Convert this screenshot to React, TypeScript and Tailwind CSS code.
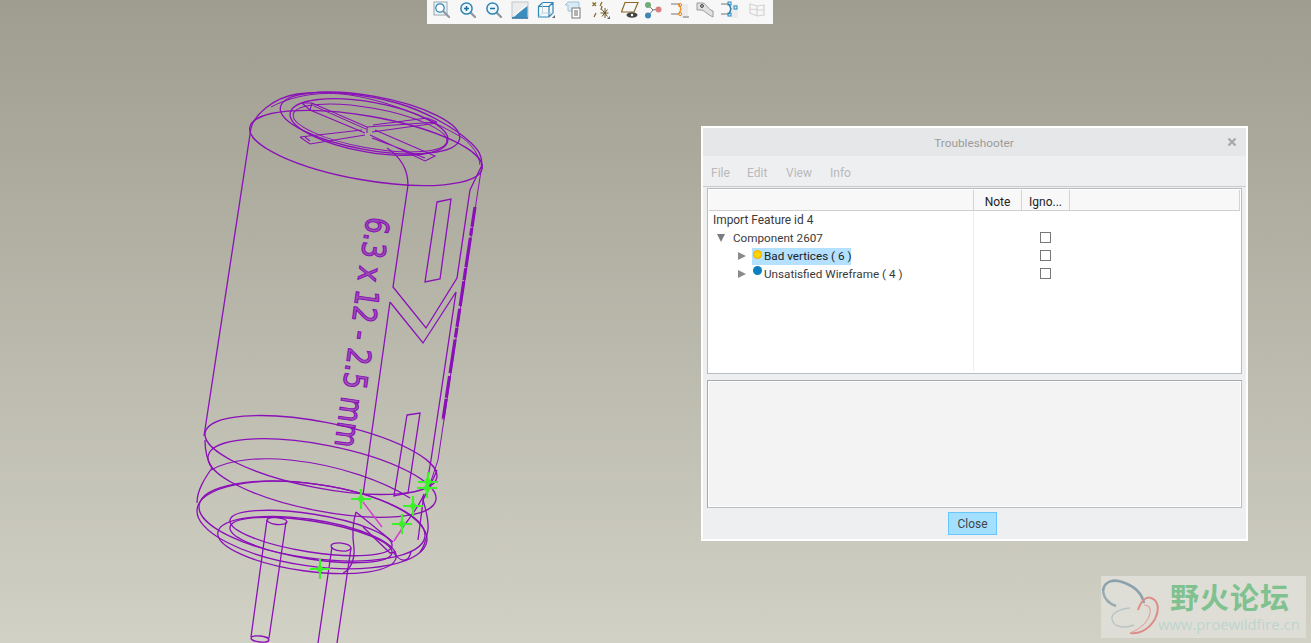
import React from "react";

const P = "#8a10b8";

function ModelDrawing() {
  const crosses: [number, number][] = [[361, 499], [413, 506], [402, 524], [428, 482], [427, 488], [320, 569]];
  return (
    <svg className="block w-full h-full" viewBox="0 0 1311 643" fill="none" stroke={P} strokeWidth="1.3">
      {/* top */}
      <ellipse cx="366" cy="148" rx="118" ry="32" transform="rotate(10 366 148)" />
      <path d="M251 128 C254 116 272 98 297 94 C325 90 365 94 397 103 C425 111 455 128 470 142 C479 150 482 156 482 165" />
      <path d="M271 107 C300 92 330 92 350 95 C395 102 435 122 463 138 C473 146 479 155 480 165" strokeWidth="1" />
      <ellipse cx="370" cy="123" rx="91" ry="27" transform="rotate(10 370 123)" />
      <ellipse cx="369" cy="127" rx="80" ry="25" transform="rotate(10 369 127)" />
      <ellipse cx="370" cy="128" rx="78" ry="20" transform="rotate(10 370 128)" strokeWidth="1" />
      {/* slot cross */}
      <path d="M302 103 L312 103 L367 127 L437 122 L427 118 L373 125" strokeWidth="1.1" />
      <path d="M302 103 L310 110 L365 133 M312 103 L310 110 M367 127 V133 M372 132 L437 123" strokeWidth="1.1" />
      <path d="M300 137 L310 144 L365 135 M300 137 L362 130 M305 137 L310 141" strokeWidth="1.1" />
      <path d="M370 135 L425 161 L435 156 L375 130 M372 138 L425 158" strokeWidth="1.1" />
      <path d="M314 106 L366 129" strokeWidth="1" />
      {/* body lines */}
      <path d="M251 128 L204 436" />
      <path d="M387 148 C402 158 408 170 408 185 L393 287 L426 328 L457 278 L470 190 L482 165" />
      <path d="M390 302 L423 343 L456 292 L431 460 L426 488" />
      <path d="M390 302 L363 495" />
      <path d="M437 202 L451 199 L440 279 L425 282 Z" />
      <path d="M407 415 L420 413 L408 493 L394 496 Z" />
      <path d="M475 207 L443 420" strokeWidth="3.2" strokeDasharray="20 1 8 2 30 1 12 1 25 3 18 1 10 2 34 3 22 1" />
      <path d="M482 165 L478 190 L438 460 L428 490" strokeWidth="1" />
      <text
        transform="translate(367 216) rotate(98)"
        fontFamily="'DejaVu Sans', sans-serif"
        fontSize="32"
        fill={P}
        fillOpacity="0.6"
        stroke={P}
        strokeWidth="1.2"
        textLength="232"
        lengthAdjust="spacingAndGlyphs"
      >
        6.3 x 12 - 2.5 mm
      </text>
      {/* lower band */}
      <ellipse cx="321" cy="455" rx="118" ry="33" transform="rotate(11 321 455)" />
      <ellipse cx="322" cy="478" rx="116" ry="33" transform="rotate(11 322 478)" />
      <path d="M205 440 C205 452 207 460 212 468 C205 478 197 490 197 503" />
      <path d="M437 470 C434 478 428 490 423 500 C426 510 429 520 428 530 C426 540 424 548 420 552" />
      <ellipse cx="312" cy="525" rx="116" ry="41" transform="rotate(8 312 525)" />
      <ellipse cx="312" cy="521" rx="114" ry="37" transform="rotate(8 312 521)" />
      <path d="M211 470 C230 459 262 457 290 460 C340 465 385 482 410 498" strokeWidth="1.1" />
      <ellipse cx="307" cy="545" rx="90" ry="26" transform="rotate(8 307 545)" />
      <ellipse cx="311" cy="533" rx="82" ry="19" transform="rotate(9 311 533)" />
      <ellipse cx="311" cy="540" rx="82" ry="19" transform="rotate(9 311 540)" />
      <path d="M356 512 L393 542 M356 512 C352 525 352 535 354 548 C355 560 350 570 343 573" />
      <path d="M363 527 L390 553 L396 552 M403 527 C412 515 420 505 424 494 L418 540" />
      <path d="M393 552 C400 562 408 564 411 552" />
      {/* pins */}
      <ellipse cx="277" cy="521" rx="10" ry="3.5" transform="rotate(6 277 521)" />
      <path d="M267 520 L251 637 M286 522 L269 638" />
      <ellipse cx="260" cy="639" rx="9" ry="3" transform="rotate(6 260 639)" />
      <ellipse cx="341" cy="547" rx="10" ry="4" transform="rotate(6 341 547)" />
      <path d="M332 547 L318 643 M351 548 L337 643" />
      {/* highlighted edges */}
      <path d="M363 502 L382 527 M403 527 L394 541" stroke="#d63ad0" strokeWidth="1.4" />
      {crosses.map(([x, y]) => (
        <g key={`${x}-${y}`} stroke="#3df02a" strokeWidth="2.2">
          <path d={`M${x - 10} ${y} H${x + 10} M${x} ${y - 10} V${y + 10}`} />
          <circle cx={x} cy={y} r="3" fill="#3df02a" stroke="none" />
        </g>
      ))}
    </svg>
  );
}

const Tip = ({ className = "", children }: { className?: string; children?: React.ReactNode }) => (
  <span className={`flex w-[26px] justify-center ${className}`}>
    <svg width="18" height="18" viewBox="0 0 18 18" fill="none">{children}</svg>
  </span>
);

function Toolbar() {
  const lens = (
    <>
      <path d="M11 11 L16 16" stroke="#8c9aa3" strokeWidth="2.4" strokeLinecap="round" />
      <circle cx="7.5" cy="7.5" r="5.6" fill="#eef6fa" stroke="#2e86b5" strokeWidth="1.5" />
    </>
  );
  return (
    <div className="flex h-[24px] w-[346px] items-start bg-[#f7f7f7] pl-[2px] pt-[1px]">
      <Tip>
        <rect x="1" y="1" width="13" height="13" fill="#eef6fa" stroke="#9aa7ae" />
        <circle cx="7" cy="7" r="4.2" fill="#fff" stroke="#2e86b5" strokeWidth="1.3" />
        <path d="M10 10 L16 16" stroke="#8c9aa3" strokeWidth="2.2" strokeLinecap="round" />
      </Tip>
      <Tip>
        {lens}
        <path d="M5 7.5 H10 M7.5 5 V10" stroke="#1d6f9c" strokeWidth="1.5" />
      </Tip>
      <Tip>
        {lens}
        <path d="M5 7.5 H10" stroke="#1d6f9c" strokeWidth="1.5" />
      </Tip>
      <Tip>
        <rect x="1" y="1" width="16" height="16" fill="#ececec" stroke="#c2c8cb" />
        <path d="M1.5 16.5 L16.5 5 V16.5 Z" fill="#3a8dbd" />
        <path d="M3 15.5 L15 4" stroke="#fff" strokeWidth="1" />
        <path d="M1 17 H17" stroke="#1d6f9c" strokeWidth="1.4" />
      </Tip>
      <Tip>
        <path d="M1.5 5.5 L5.5 1.5 H16 V12 L12 16 H1.5 Z M1.5 5.5 H12 V16 M12 5.5 L16 1.5" stroke="#2e86b5" strokeWidth="1.2" />
        <path d="M5.5 1.5 V12 H16 M5.5 12 L1.5 16" stroke="#a9c9da" strokeWidth="0.8" />
        <path d="M15 17 L18 17 L18 14 Z" fill="#666" />
      </Tip>
      <Tip className="ml-[1px]">
        <path d="M1 4 L4 1 H15 V10 H4 V4 Z" fill="#d9ebf5" stroke="#9fc3d8" />
        <rect x="8" y="7" width="8" height="10" fill="#fff" stroke="#777" />
        <path d="M10 10 H14 M10 12 H14 M10 14 H14" stroke="#666" />
      </Tip>
      <Tip className="ml-[2px]">
        <path d="M0.5 1.5 L4 5 M4 1.5 L0.5 5 M10 1 L8 5 M4 12 L2 16 M10 5 L9 9" stroke="#8a6a2c" strokeWidth="1.3" />
        <path d="M13 7 V17 M8.5 12 H16.5 M10 8.5 L15.5 15.5 M15.5 8.5 L10 15.5" stroke="#6a5424" strokeWidth="1" />
        <path d="M15 18 L18 18 L18 15 Z" fill="#666" />
      </Tip>
      <Tip className="ml-[3px]">
        <path d="M0.5 11 L4 1.5 H17 L13 11 Z" stroke="#8a6a2c" strokeWidth="1.2" />
        <ellipse cx="11" cy="14" rx="5.5" ry="2.8" fill="#444" />
        <circle cx="11" cy="14" r="1.2" fill="#fff" />
      </Tip>
      <Tip className="ml-[-3px]">
        <path d="M4 4 L9 9 L15 8 M9 9 L4 15" stroke="#777" strokeWidth="1" />
        <circle cx="4" cy="4" r="3" fill="#6cae75" />
        <circle cx="14.5" cy="8.5" r="3" fill="#d98080" />
        <circle cx="4" cy="14.5" r="3" fill="#3f86b5" />
      </Tip>
      <Tip className="ml-[1px]">
        <path d="M8 3 L17 3 V13 L17 17 H10 L8 13 Z" fill="#ececec" />
        <path d="M0 3 H8 M0 13 H8 M12 16 H18" stroke="#777" />
        <path d="M8 3 L10 8 L8 13" stroke="#e58a1f" strokeWidth="1.2" />
        <circle cx="9" cy="4" r="1.6" stroke="#e58a1f" />
        <circle cx="9" cy="13" r="1.6" stroke="#e58a1f" />
      </Tip>
      <Tip className="ml-[-1px]">
        <path d="M1 2 H7 C11 3 11 8 17 10 V16 C12 14 9 10 6 9 H1 Z" fill="#e2e2e2" stroke="#9a9a9a" />
        <circle cx="6" cy="5" r="1.4" stroke="#333" />
      </Tip>
      <Tip className="ml-[-1px]">
        <path d="M8 3 H17 V17 H10 L8 13 Z" fill="#ececec" />
        <path d="M8 3 L10 8 L8 13" stroke="#2c6f9c" strokeWidth="1.3" />
        <path d="M0 3 H8 M0 13 H8" stroke="#777" />
        <rect x="7" y="1" width="3" height="3" stroke="#1a8ac4" />
        <rect x="13" y="5" width="3" height="3" stroke="#1a8ac4" />
        <rect x="7" y="12" width="3" height="3" stroke="#1a8ac4" />
      </Tip>
      <Tip className="ml-[1px]">
        <path d="M2 3 L9 5 L16 4 V14 L9 15 L2 12 Z M9 5 V15 M2 8 L16 9" stroke="#d0d2d0" strokeWidth="1.2" />
      </Tip>
    </div>
  );
}

const Tri = ({ down }: { down?: boolean }) =>
  down ? (
    <span className="h-0 w-0 border-x-[4.5px] border-t-[8px] border-x-transparent border-t-[#7d7d7d]" />
  ) : (
    <span className="h-0 w-0 border-y-[4.5px] border-l-[8px] border-y-transparent border-l-[#8a8a8a]" />
  );

const Check = () => <span className="block h-[11px] w-[11px] border border-[#777] bg-white" />;

const rowGrid = "grid h-[18px] grid-cols-[265px_48px_48px_1fr] items-center";

function TreeRow({ children }: { children: React.ReactNode }) {
  return (
    <div className={rowGrid}>
      <div className="flex h-full items-center whitespace-nowrap pl-[5px] text-[11.7px]">{children}</div>
      <div />
      <div className="flex justify-center pb-[2px] pr-[2px]"><Check /></div>
    </div>
  );
}

function Dialog() {
  return (
    <div className="flex h-[415px] w-[547px] flex-col border-2 border-white bg-[#eeeff1] text-[12px] leading-none text-[#3a3a3a]">
      <div className="relative flex h-[28px] shrink-0 items-center justify-center bg-[#e6e7e9] pt-[4px] text-[#9b9b9b]">
        <span className="ml-[-1px] text-[11.8px]">Troubleshooter</span>
        <svg className="absolute right-[9px] top-[9px]" width="10" height="10" viewBox="0 0 10 10">
          <path d="M1.5 1.5 L8.5 8.5 M8.5 1.5 L1.5 8.5" stroke="#a9a9a9" strokeWidth="2.4" />
        </svg>
      </div>
      <div className="flex h-[31px] shrink-0 items-center border-b border-[#c9cacc] pl-[8px] pt-[3px] text-[#b9b9b9]">
        <span className="w-[36px]">File</span>
        <span className="w-[39px]">Edit</span>
        <span className="w-[44px]">View</span>
        <span>Info</span>
      </div>
      <div className="flex flex-1 flex-col px-[4px] pb-[4px] pt-[1px]">
        <div className="flex h-[186px] shrink-0 flex-col border border-[#b9bcc0] bg-white p-[1px]">
          <div className="grid h-[21px] shrink-0 grid-cols-[265px_48px_48px_1fr] border-b border-[#d0d0d0] bg-[#f8f8f8] text-[#222]">
            <div className="border-r border-[#d4d4d4]" />
            <div className="flex items-center justify-center border-r border-[#d4d4d4] pt-[3px]">Note</div>
            <div className="flex items-center justify-center border-r border-[#d4d4d4] pt-[3px]">Igno...</div>
            <div className="border-r border-[#d4d4d4]" />
          </div>
          <div className="relative flex-1">
            <div className="absolute bottom-[1px] left-[264px] top-0 w-px bg-[#eeeeee]" />
            <div className={rowGrid}>
              <div className="whitespace-nowrap pl-[4px] pt-[2px] text-[11.9px]">Import Feature id 4</div>
            </div>
            <TreeRow>
              <span className="ml-[3px] flex w-[16px]"><Tri down /></span>
              <span className="pt-[1px]">Component 2607</span>
            </TreeRow>
            <TreeRow>
              <span className="ml-[24px] flex w-[14px]"><Tri /></span>
              <span className="relative flex h-[17px] w-[99px] items-center bg-[#b3e1ff] pl-[12px] pt-[1px] text-[#222]">
                <span className="absolute left-[1px] top-[2px] h-[9px] w-[9px] rounded-full border border-[#f0a800] bg-[#ffd400]" />
                Bad vertices ( 6 )
              </span>
            </TreeRow>
            <TreeRow>
              <span className="ml-[24px] flex w-[14px]"><Tri /></span>
              <span className="relative flex items-center pl-[12px] pt-[1px]">
                <span className="absolute left-[1px] top-[-2px] h-[9px] w-[9px] rounded-full bg-[#0b7fc0]" />
                Unsatisfied Wireframe ( 4 )
              </span>
            </TreeRow>
          </div>
        </div>
        <div className="mt-[6px] h-[128px] shrink-0 border border-b-[#b9bcc0] border-l-[#a9a9a9] border-r-[#b9bcc0] border-t-[#a9a9a9] bg-[#f3f3f3] shadow-[inset_0_0_0_1px_#ffffff]" />
        <div className="flex flex-1 items-start justify-center pt-[4px]">
          <button className="ml-[-4px] flex h-[23px] w-[49px] items-center justify-center border border-[#66c6ff] bg-[#a3dfff] text-[#444]">
            Close
          </button>
        </div>
      </div>
    </div>
  );
}

function Watermark() {
  return (
    <div className="flex h-[62px] w-[205px] items-start bg-[#dfded6]">
      <svg className="ml-[1px] mt-[3px] shrink-0" width="58" height="56" viewBox="0 0 58 56" fill="none">
        <path d="M1 12 C2 2 12 -1 23 4 C33 8 40 15 42 24" stroke="#8ba2ad" strokeWidth="2.6" />
        <path d="M1 12 C2 20 8 25 14 27" stroke="#98aab2" strokeWidth="2.4" />
        <path d="M28 29 C18 30 9 34 10 40 C11 48 22 50 32 46" stroke="#b9c3c5" strokeWidth="1.4" />
        <path d="M36 31 C39 22 44 17 49 19 C56 21 58 30 53 40 C47 50 38 55 28 54" stroke="#dc8d88" strokeWidth="2" />
        <path d="M28 54 C38 50 46 44 48 34 C49 28 46 26 42 26" stroke="#dfa5a0" strokeWidth="1.2" />
      </svg>
      <div className="flex min-w-0 flex-col">
        <div className="ml-[10px] mt-[4px] whitespace-nowrap text-[29px] font-bold leading-[32px] tracking-[1px] text-[#80c190] [font-family:'Noto_Sans_CJK_SC',sans-serif]">
          野火论坛
        </div>
        <div className="ml-[-2px] mt-[3px] whitespace-nowrap text-[14.8px] leading-[18px] text-[#bdd4ce] [font-family:'Open_Sans',sans-serif]">
          www.proewildfire.cn
        </div>
      </div>
    </div>
  );
}

export default function App() {
  return (
    <div className="relative h-screen w-full overflow-hidden bg-gradient-to-b from-[#9e9d90] to-[#d2d1c5] [font-family:Roboto,sans-serif]">
      <ModelDrawing />
      <div className="absolute left-[427px] top-0"><Toolbar /></div>
      <div className="absolute left-[701px] top-[126px]"><Dialog /></div>
      <div className="absolute left-[1101px] top-[576px]"><Watermark /></div>
    </div>
  );
}
